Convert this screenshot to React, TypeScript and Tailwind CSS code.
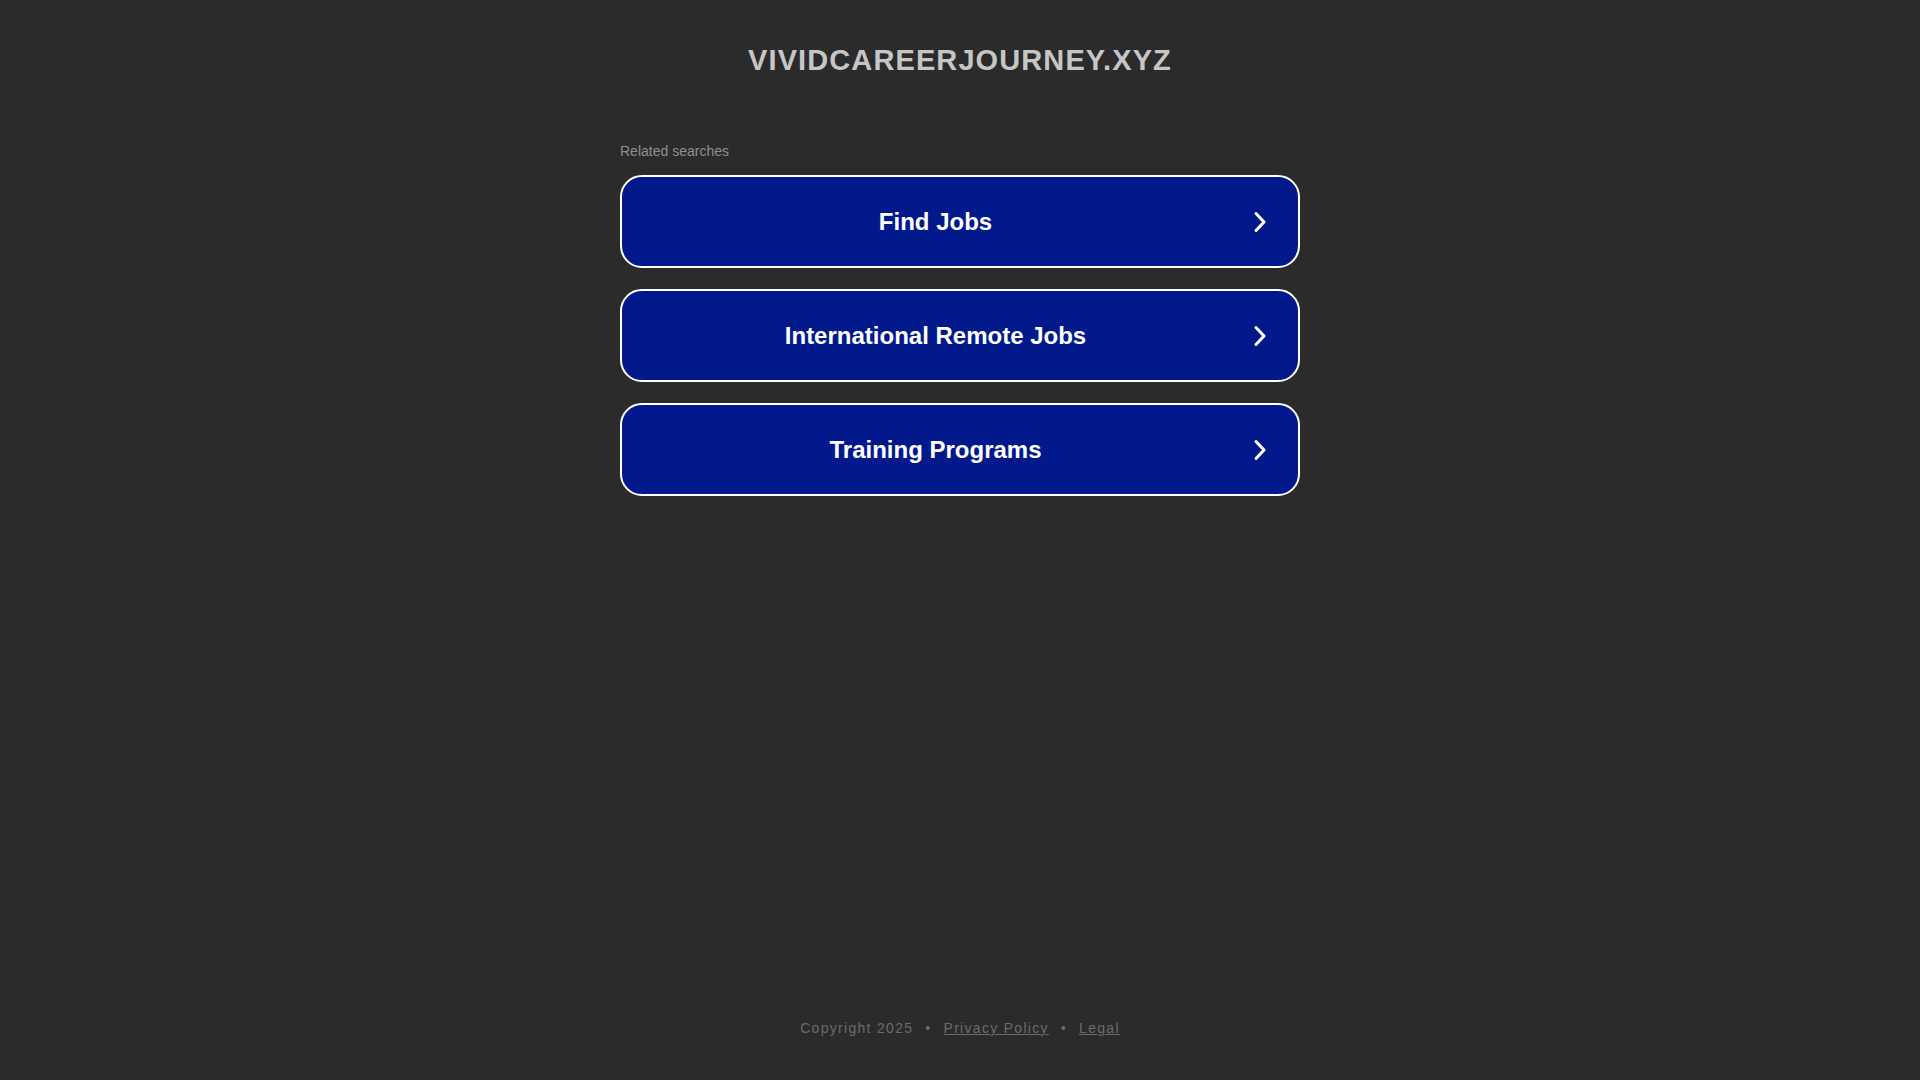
const searches = ['Find Jobs', 'International Remote Jobs', 'Training Programs'];

const Chevron = () => (
  <svg width="14" height="22" viewBox="0 0 14 22" fill="none" className="shrink-0">
    <path d="M3 2.5 L11 11 L3 19.5" stroke="white" strokeWidth="3" strokeLinecap="round" strokeLinejoin="round" />
  </svg>
);

export default function App() {
  return (
    <div className="flex min-h-screen flex-col bg-[#2b2b2b] font-['Liberation_Sans',Arial,sans-serif]">
      <header className="pt-[43px] text-center">
        <h1 className="text-[29px] font-bold leading-[34px] tracking-[1.1px] text-[#c6c6c6]">VIVIDCAREERJOURNEY.XYZ</h1>
      </header>

      <main className="mx-auto mt-[66px] w-[680px]">
        <p className="text-[14px] leading-[16px] text-[#8f8f8f]">Related searches</p>
        <div className="mt-[16px] flex flex-col gap-[21px]">
          {searches.map((label) => (
            <a
              key={label}
              href="#"
              className="flex h-[93px] items-center rounded-[22px] border-2 border-white bg-[#01198a] text-white"
            >
              <span className="flex-1 pl-[2px] text-center text-[24px] font-bold">{label}</span>
              <span className="ml-[6px] mr-[31px] flex w-[14px] justify-center">
                <Chevron />
              </span>
            </a>
          ))}
        </div>
      </main>

      <footer className="mt-auto pb-[41px] text-center text-[14px] tracking-[1.3px] text-[#6b6b6b]">
        <span>Copyright 2025</span>
        <span className="mx-[12px]">•</span>
        <a href="#" className="underline">Privacy Policy</a>
        <span className="mx-[12px]">•</span>
        <a href="#" className="underline">Legal</a>
      </footer>
    </div>
  );
}
